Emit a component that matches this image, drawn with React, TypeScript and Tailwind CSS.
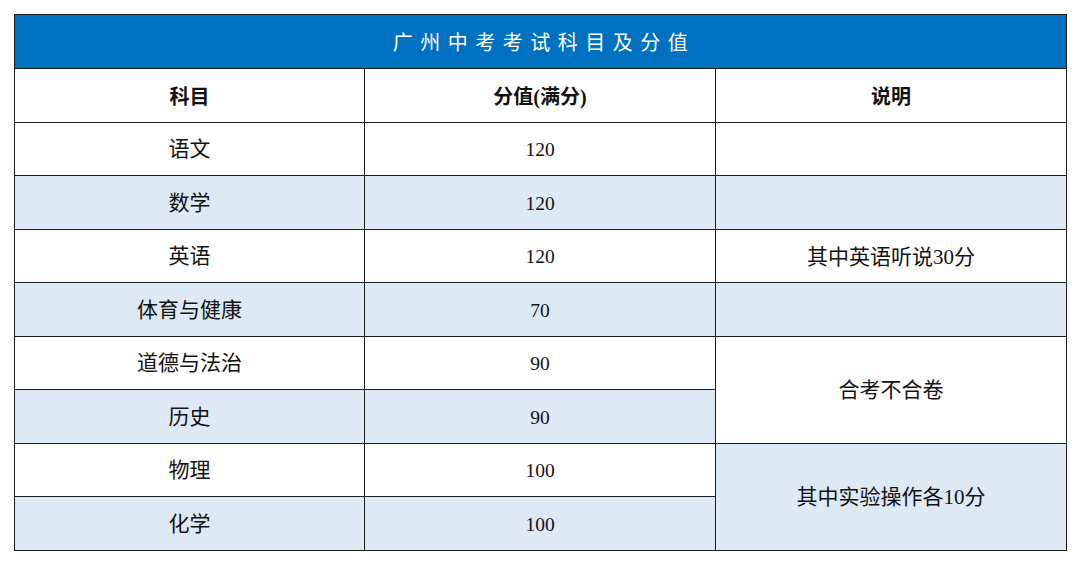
const rows = [
  { name: '语文', score: '120', note: '', shade: false },
  { name: '数学', score: '120', note: '', shade: true },
  { name: '英语', score: '120', note: ['其中英语听说', '30', '分'], shade: false },
  { name: '体育与健康', score: '70', note: '', shade: true },
  { name: '道德与法治', score: '90', note: '合考不合卷', shade: false, span: 2 },
  { name: '历史', score: '90', note: null, shade: true },
  { name: '物理', score: '100', note: ['其中实验操作各', '10', '分'], shade: false, span: 2, noteShade: true },
  { name: '化学', score: '100', note: null, shade: true },
];

const cell = 'border-[1.5px] border-[#1c1c1c] text-center align-middle p-0';

function Note({ note }: { note: string | string[] }) {
  if (typeof note === 'string') return <>{note}</>;
  return (
    <>
      {note[0]}
      <span className="font-['Liberation_Serif',serif]">{note[1]}</span>
      {note[2]}
    </>
  );
}

export default function App() {
  return (
    <div className="w-[1080px] h-[564px] bg-white pt-[14px] pl-[14px] font-['Liberation_Serif','Noto_Sans_CJK_SC',serif] text-[#111]">
      <table className="w-[1052px] border-collapse table-fixed">
        <colgroup>
          <col className="w-[350px]" />
          <col className="w-[351px]" />
          <col className="w-[351px]" />
        </colgroup>
        <tbody>
          <tr className="h-[54px]">
            <td colSpan={3} className={`${cell} bg-[#0070c0] text-white text-[20px] tracking-[7.5px] pl-[7px] pt-[3px]`}>
              广州中考考试科目及分值
            </td>
          </tr>
          <tr className="h-[53.5px] font-bold text-[20px]">
            <td className={`${cell} pt-[4px]`}>科目</td>
            <td className={`${cell} pt-[4px]`}>分值(满分)</td>
            <td className={`${cell} pt-[4px]`}>说明</td>
          </tr>
          {rows.map((r) => (
            <tr key={r.name} className={`h-[53.5px] ${r.shade ? 'bg-[#ddeaf6]' : 'bg-white'}`}>
              <td className={`${cell} text-[21px] pt-[2px]`}>{r.name}</td>
              <td className={`${cell} text-[19.5px] pt-[2px]`}>{r.score}</td>
              {r.note !== null && (
                <td
                  rowSpan={r.span ?? 1}
                  className={`${cell} text-[21px] pt-[3px] ${r.noteShade ? 'bg-[#ddeaf6]' : r.span ? 'bg-white' : ''}`}
                >
                  <Note note={r.note} />
                </td>
              )}
            </tr>
          ))}
        </tbody>
      </table>
    </div>
  );
}
